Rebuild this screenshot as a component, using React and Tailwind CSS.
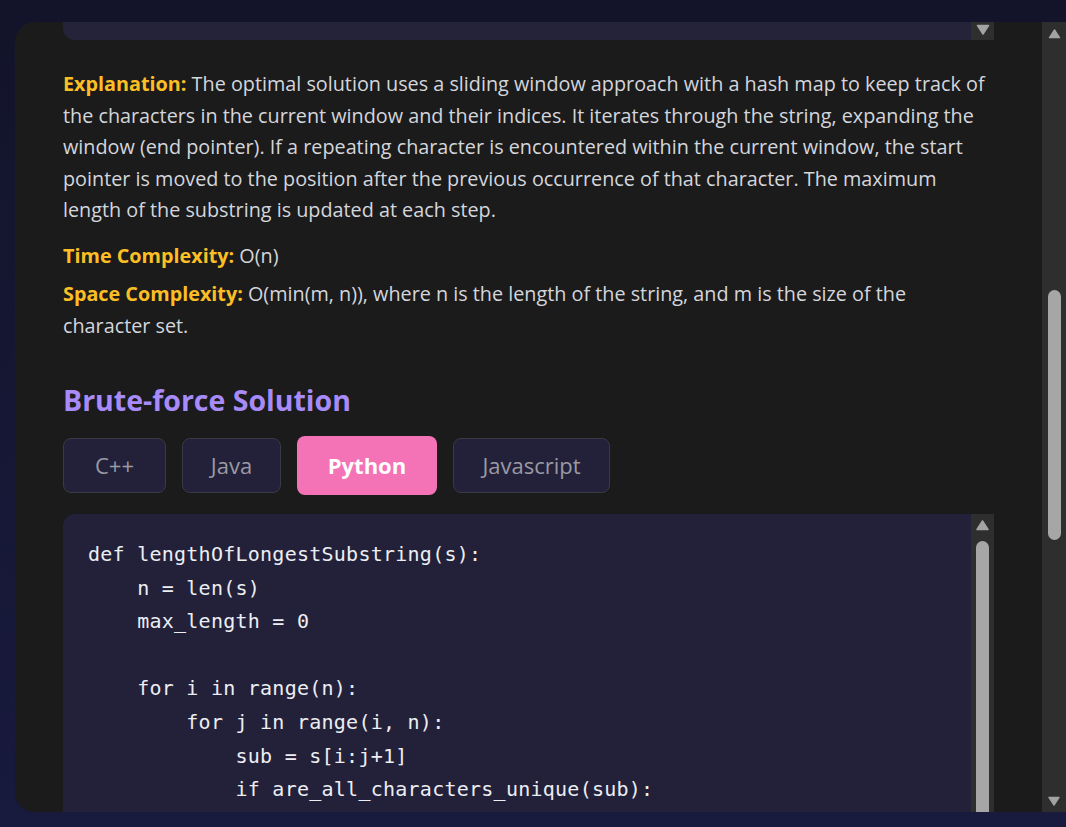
import React from 'react'

const CODE = [
  'def lengthOfLongestSubstring(s):',
  '    n = len(s)',
  '    max_length = 0',
  '',
  '    for i in range(n):',
  '        for j in range(i, n):',
  '            sub = s[i:j+1]',
  '            if are_all_characters_unique(sub):',
  '                max_length = max(max_length, len(sub))',
  '',
  '    return max_length',
]

const TABS = [
  { label: 'C++', w: 'w-[103px]' },
  { label: 'Java', w: 'w-[99px]' },
  { label: 'Python', w: 'w-[140px]', active: true },
  { label: 'Javascript', w: 'w-[157px]' },
]

function Arrow({ down, className }) {
  return (
    <svg viewBox="0 0 14 11" className={className}>
      {down ? (
        <path d="M1.5 1.5 L12.5 1.5 L7 10 Z" fill="#a3a3a3" stroke="#a3a3a3" strokeWidth="1.5" strokeLinejoin="round" />
      ) : (
        <path d="M1.5 9.5 L12.5 9.5 L7 1 Z" fill="#a3a3a3" stroke="#a3a3a3" strokeWidth="1.5" strokeLinejoin="round" />
      )}
    </svg>
  )
}

export default function App() {
  return (
    <div className="w-[1066px] h-[827px] overflow-hidden bg-linear-to-b from-[#13142a] to-[#181a3e] pt-[22px] pl-[15px]" style={{ fontFamily: '"Open Sans", "Noto Sans", sans-serif' }}>
      <div className="h-[790px] bg-[#1b1b1c] rounded-l-[20px] flex overflow-hidden">
        {/* contenu */}
        <div className="flex-1 pl-[48px] pr-[48px] overflow-hidden">
          {/* fin du bloc de code précédent */}
          <div className="h-[18px] bg-[#25233a] rounded-bl-xl flex justify-end">
            <div className="w-[23px] bg-[#2e2e2e] flex justify-center pt-[2px]">
              <Arrow down className="w-[14px] h-[11px]" />
            </div>
          </div>

          <p className="mt-[28px] text-[19.8px] leading-[31.5px] text-[#d4d6db]">
            <span className="font-bold text-[#fbbf24]">Explanation:</span> The optimal solution uses a sliding window approach with a hash map to keep track of the characters in the current window and their indices. It iterates through the string, expanding the window (end pointer). If a repeating character is encountered within the current window, the start pointer is moved to the position after the previous occurrence of that character. The maximum length of the substring is updated at each step.
          </p>
          <p className="mt-[14.5px] text-[19.8px] leading-[31.5px] text-[#d4d6db]">
            <span className="font-bold text-[#fbbf24]">Time Complexity:</span> O(n)
          </p>
          <p className="mt-[6.5px] text-[19.8px] leading-[31.5px] text-[#d4d6db] pr-[60px]">
            <span className="font-bold text-[#fbbf24]">Space Complexity:</span> O(min(m, n)), where n is the length of the string, and m is the size of the character set.
          </p>

          <h2 className="mt-[41px] text-[28.5px] leading-[36px] font-bold text-[#a78bfa]">Brute-force Solution</h2>

          <div className="mt-[18px] flex items-center gap-4 h-[59px]">
            {TABS.map((t) =>
              t.active ? (
                <button key={t.label} className={`${t.w} h-[59px] rounded-lg bg-[#f472b6] text-white font-bold text-[22px]`}>
                  {t.label}
                </button>
              ) : (
                <button key={t.label} className={`${t.w} h-[55px] rounded-lg bg-[#23213a] border border-[#3a3946] text-[#9a9aa3] text-[22px]`}>
                  {t.label}
                </button>
              )
            )}
          </div>

          <div className="mt-[19px] h-[400px] bg-[#23213a] rounded-tl-xl flex">
            <pre
              className="flex-1 pt-6 pl-[25px] text-[20px] leading-[33.6px] text-[#eceef2] tracking-[0.25px]"
              style={{ fontFamily: '"DejaVu Sans Mono", "Liberation Mono", monospace' }}
            >
              {CODE.join('\n')}
            </pre>
            <div className="w-[23px] bg-[#2e2e2e] flex flex-col items-center pt-[6px]">
              <Arrow className="w-[15px] h-[11px]" />
              <div className="mt-[10px] w-[13px] h-[300px] rounded-full bg-[#a6a6a6]" />
            </div>
          </div>
        </div>

        {/* barre de défilement du panneau */}
        <div className="w-[24px] bg-[#2e2e2e] flex flex-col items-center pt-[7px] pb-[6px]">
          <Arrow className="w-[13px] h-[10px]" />
          <div className="mt-[251px] w-[13px] h-[250px] rounded-full bg-[#a6a6a6]" />
          <div className="flex-1" />
          <Arrow down className="w-[14px] h-[10px]" />
        </div>
      </div>
    </div>
  )
}
